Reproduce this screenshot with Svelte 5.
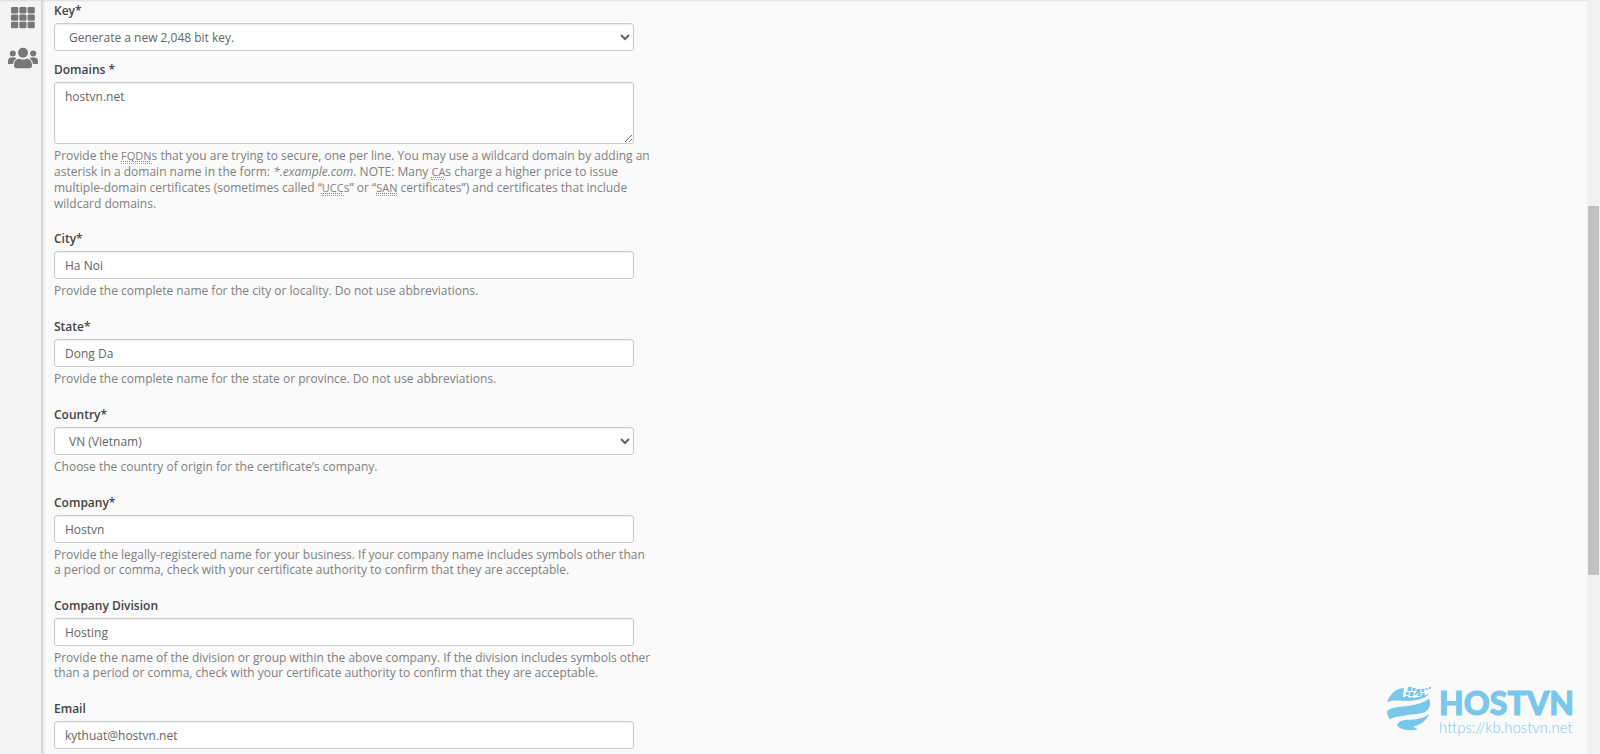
<script>
	let key = 'new';
	let domains = 'hostvn.net';
	let city = 'Ha Noi';
	let region = 'Dong Da';
	let country = 'VN';
	let company = 'Hostvn';
	let division = 'Hosting';
	let email = 'kythuat@hostvn.net';

	// cells of the 3x3 apps icon
	const cells = [0, 1, 2];

	// x, y, size of the small squares on top of the globe
	const tiles = [
		[19, 0, 4], [24, 1, 3], [28, 2, 4], [33, 2, 3], [37, 1, 2], [40, 0, 2],
		[18, 5, 3], [22, 5, 4], [27, 6, 2], [30, 6, 3], [34, 6, 3], [18, 9, 3], [23, 10, 3]
	];
</script>

<div class="page">
	<nav class="sidebar">
		<a href="#tools" aria-label="Tools">
			<svg width="24" height="22" viewBox="0 0 24 22">
				{#each cells as row}
					{#each cells as col}
						<rect x={col * 8.3} y={row * 7.4} width="7.2" height="6.4" rx="1.3" />
					{/each}
				{/each}
			</svg>
		</a>
		<a href="#users" aria-label="User Manager">
			<svg width="30" height="22" viewBox="0 0 30 22">
				<circle cx="15" cy="5.7" r="5" />
				<circle cx="4.8" cy="6.5" r="3" />
				<circle cx="25.2" cy="6.5" r="3" />
				<path d="M6 18.5c0-4 2.2-6.7 5.3-6.7 1 0 1.8.8 3.7.8s2.7-.8 3.7-.8c3.1 0 5.3 2.7 5.3 6.7 0 1.8-1 2.7-2.5 2.7h-13c-1.5 0-2.5-.9-2.5-2.7z" />
				<path d="M0 16.5v-2.2c0-2.2 1.3-3.8 3.3-3.8h3c.9 0 1.7.3 2.2.9-2 1.1-3.2 3-3.5 5.600H1c-.6 0-1-.1-1-.5z" />
				<path d="M30 16.5v-2.2c0-2.2-1.3-3.8-3.3-3.8h-3c-.9 0-1.7.3-2.2.9 2 1.1 3.2 3 3.5 5.600h4c.6 0 1-.1 1-.5z" />
			</svg>
		</a>
	</nav>

	<main>
		<form>
			<div class="group tight">
				<label for="key">Key*</label>
				<select id="key" bind:value={key}>
					<option value="new">Generate a new 2,048 bit key.</option>
				</select>
			</div>

			<div class="group domains">
				<label for="domains">Domains *</label>
				<textarea id="domains" bind:value={domains}></textarea>
				<p class="help">
					Provide the <abbr title="Fully Qualified Domain Name">FQDN</abbr>s that you are trying to secure, one per line.
					You may use a wildcard domain by adding an asterisk in a domain name in the form: <em>*.example.com</em>.
					NOTE: Many <abbr title="Certificate Authority">CA</abbr>s charge a higher price to issue multiple-domain
					certificates (sometimes called “<abbr title="Unified Communications Certificate">UCC</abbr>s” or
					“<abbr title="Subject Alternate Name">SAN</abbr> certificates”) and certificates that include wildcard domains.
				</p>
			</div>

			<div class="group">
				<label for="city">City*</label>
				<input id="city" type="text" bind:value={city} />
				<p class="help">Provide the complete name for the city or locality. Do not use abbreviations.</p>
			</div>

			<div class="group">
				<label for="state">State*</label>
				<input id="state" type="text" bind:value={region} />
				<p class="help">Provide the complete name for the state or province. Do not use abbreviations.</p>
			</div>

			<div class="group">
				<label for="country">Country*</label>
				<select id="country" bind:value={country}>
					<option value="VN">VN (Vietnam)</option>
				</select>
				<p class="help">Choose the country of origin for the certificate’s company.</p>
			</div>

			<div class="group">
				<label for="company">Company*</label>
				<input id="company" type="text" bind:value={company} />
				<p class="help">
					Provide the legally-registered name for your business. If your company name includes symbols other than
					a period or comma, check with your certificate authority to confirm that they are acceptable.
				</p>
			</div>

			<div class="group">
				<label for="division">Company Division</label>
				<input id="division" type="text" bind:value={division} />
				<p class="help">
					Provide the name of the division or group within the above company. If the division includes symbols other
					than a period or comma, check with your certificate authority to confirm that they are acceptable.
				</p>
			</div>

			<div class="group last">
				<label for="email">Email</label>
				<input id="email" type="email" bind:value={email} />
			</div>
		</form>
	</main>

	<div class="scrollbar"><div class="thumb"></div></div>

	<div class="watermark">
		<svg width="44" height="44" viewBox="0 0 44 44">
			<path d="M0 15C3 7 9 1 18 1l-1.500 8.500c8 1.500 16 .5 25.500-2.500-5 5-13 6.700-21 6.700C13 13.700 7 12.500 0 15z" />
			<path d="M0 24c4-4 14-4 22-5.200 8-1.300 15-3 20-7.300 2.200 5 1 10-2.500 12.500-5 3.500-13 3-20 4.200-7 1.200-13 1.500-16.500 4C.8 30 0 27 0 24z" />
			<path d="M10.500 37c4-6.500 14-3 22-5.500 3.500-1 7-2.200 9.500-4.500-2 6.500-8 10.500-15.500 12.500 1.500 1 2.500 2 4.500 2.700-6 1.800-14.500 1.300-18.500-1.400-1.800-1.300-2.700-2.500-2-3.800z" />
			<path class="gap" d="M17 0h26l-4 8-12 3-11-1z" />
			<g transform="translate(2 0) skewX(-10)">
				{#each tiles as [x, y, size]}
					<rect {x} {y} width={size} height={size} />
				{/each}
			</g>
			<path d="M17 12c9 0 18-1 25-5-5 5-13 6.700-21 6.700z" />
		</svg>
		<div class="brand">
			<span class="name">HOSTVN</span>
			<span class="url">https://kb.hostvn.net</span>
		</div>
	</div>
</div>

<style>
	:global(body) {
		margin: 0;
		background: #fafafa;
	}

	.page {
		position: relative;
		display: flex;
		min-height: 100vh;
		color: #808080;
		font: 12px/15px 'Open Sans', 'Noto Sans', sans-serif;
		box-shadow: inset 0 2px 2px -1px #ddd;
	}

	.sidebar {
		display: flex;
		flex-direction: column;
		align-items: center;
		gap: 18px;
		box-sizing: border-box;
		width: 41px;
		padding: 7px 0 0 4px;
		background: #f4f4f4;
		box-shadow: 1px 0 3px 1px #ccc, inset 0 2px 2px -1px #ddd;
	}

	.sidebar a {
		display: flex;
	}

	.sidebar svg {
		fill: #777;
	}

	main {
		flex: 1;
		padding: 2px 13px 0;
	}

	form {
		max-width: 580px;
	}

	.group {
		margin-bottom: 20px;
	}

	.group.tight {
		margin-bottom: 10px;
	}

	.group.domains {
		margin-bottom: 18px;
	}

	.group.last {
		margin-bottom: 0;
	}

	label {
		display: block;
		margin-bottom: 4px;
		color: #444;
		font-weight: 600;
		line-height: 17px;
	}

	input,
	select,
	textarea {
		display: block;
		box-sizing: border-box;
		width: 100%;
		height: 28px;
		margin: 0;
		padding: 0 10px;
		border: 1px solid #ccc;
		border-radius: 3px;
		background: #fff;
		color: #666;
		font: inherit;
		box-shadow: inset 0 1px 1px rgba(0, 0, 0, 0.08);
	}

	textarea {
		height: 62px;
		padding-top: 6px;
		resize: vertical;
	}

	/* help text may run a little past the field */
	.help {
		margin: 4px -18px 0 0;
	}

	.domains .help {
		line-height: 16px;
	}

	abbr {
		border-bottom: 1px dotted #999;
		font-size: 11px;
		line-height: 1;
		text-decoration: underline dotted;
	}

	.scrollbar {
		width: 13px;
		background: #f1f1f1;
	}

	.thumb {
		height: 49vh;
		margin: 206px 1px 0;
		background: #c1c1c1;
	}

	.watermark {
		position: absolute;
		right: 26px;
		bottom: 19px;
		display: flex;
		align-items: flex-start;
		gap: 8px;
		color: #79c7ea;
	}

	.watermark svg {
		fill: #79c7ea;
	}

	.watermark .gap {
		fill: #fafafa;
	}

	.brand {
		display: flex;
		flex-direction: column;
	}

	.name {
		font: 900 32px/32px Lato, sans-serif;
		-webkit-text-stroke: 1px #79c7ea;
	}

	.url {
		font: 300 15px/16px Lato, sans-serif;
	}
</style>
